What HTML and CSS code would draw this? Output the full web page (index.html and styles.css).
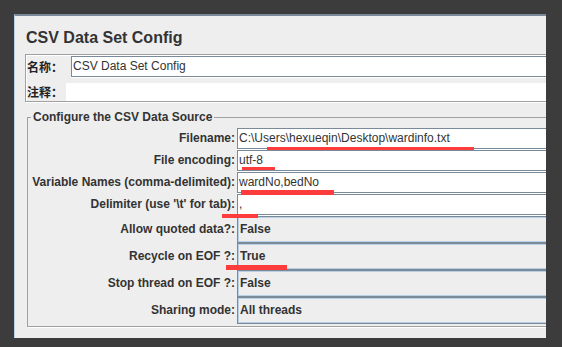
FILE: index.html
```html
<!DOCTYPE html>
<html lang="zh-CN">
<head>
  <meta charset="UTF-8" />
  <title>CSV Data Set Config</title>
  <link rel="stylesheet" href="styles.css">
</head>
<body>

  <div class="painel">
    <h1 class="titulo">CSV Data Set Config</h1>

    <!-- nome e comentario -->
    <div class="caixa-nome">
      <div class="linha-nome">
        <span class="rotulo-cn rotulo-nome">名称：</span>
        <div class="campo">CSV Data Set Config</div>
      </div>
      <div class="linha-comentario">
        <span class="rotulo-cn rotulo-comentario">注释：</span>
        <div class="area"></div>
      </div>
    </div>

    <fieldset class="grupo">
      <legend>Configure the CSV Data Source</legend>

      <div class="linha texto">
        <label>Filename:</label>
        <div class="campo">C:\Users\hexueqin\Desktop\wardinfo.txt</div>
      </div>
      <div class="linha texto">
        <label>File encoding:</label>
        <div class="campo">utf-8</div>
      </div>
      <div class="linha texto">
        <label>Variable Names (comma-delimited):</label>
        <div class="campo">wardNo,bedNo</div>
      </div>
      <div class="linha texto">
        <label>Delimiter (use '\t' for tab):</label>
        <div class="campo">,</div>
      </div>

      <div class="linha combo">
        <label>Allow quoted data?:</label>
        <div class="caixa-combo">False</div>
      </div>
      <div class="linha combo">
        <label>Recycle on EOF ?:</label>
        <div class="caixa-combo">True</div>
      </div>
      <div class="linha combo">
        <label>Stop thread on EOF ?:</label>
        <div class="caixa-combo">False</div>
      </div>
      <div class="linha combo">
        <label>Sharing mode:</label>
        <div class="caixa-combo">All threads</div>
      </div>
    </fieldset>
  </div>

  <!-- marcas vermelhas por cima da captura -->
  <div class="marca marca-arquivo"></div>
  <div class="marca marca-encoding"></div>
  <div class="marca marca-variaveis"></div>
  <div class="marca marca-delimitador"></div>
  <div class="marca marca-recycle"></div>

</body>
</html>
```

FILE: styles.css
```css
html, body {
  margin: 0; padding: 0;
  height: 100%;
  overflow: hidden;
  background: #3c3c3c;
  font-family: 'Liberation Sans', Arial, sans-serif;
  color: #333;
}

.painel {
  margin: 14px 0 0 14px;
  width: 532px;
  height: 324px;
  box-sizing: border-box;
  padding-left: 10px;
  background: #eeeeee;
  border-top: 2px solid #7b8a9a;
  border-left: 1px solid #b8cfe5;
  overflow: hidden;
}

.titulo {
  margin: 13px 0 7px 1px;
  font-size: 16px;
  line-height: 18px;
  font-weight: bold;
}

/* caixa do nome / comentario */
.caixa-nome {
  width: 600px;
  padding: 1px 0 0 1px;
  border: 1px solid #a0a0a0;
  box-shadow: inset 1px 1px 0 #fff, 1px 1px 0 #fff;
}

.rotulo-cn {
  font-family: 'Noto Sans CJK SC', sans-serif;
  font-size: 12px;
  font-weight: bold;
  color: #222;
}

.linha-nome {
  display: flex;
  height: 21px;
}

.rotulo-nome {
  width: 44px;
  line-height: 21px;
}

.linha-comentario {
  display: flex;
  height: 18px;
  margin-top: 6px;
}

.rotulo-comentario {
  width: 39px;
  line-height: 18px;
}

.area {
  flex: 1;
  background: white;
}

.campo {
  flex: 1;
  box-sizing: border-box;
  height: 21px;
  padding-left: 1px;
  background: white;
  border: 1px solid #7a8a99;
  box-shadow: 0 1px 0 #fff;
  font-size: 12px;
  line-height: 19px;
  white-space: nowrap;
}

/* grupo csv */
.grupo {
  width: 600px;
  min-width: 0;
  box-sizing: border-box;
  margin: 8px 0 0 2px;
  padding: 4px 0 2px 0;
  border: 1px solid #a0a0a0;
  box-shadow: 1px 1px 0 #fff;
}

.grupo legend {
  margin-left: 3px;
  padding: 0 2px;
  font-size: 12px;
  line-height: 14px;
  font-weight: bold;
}

.linha {
  display: grid;
  grid-template-columns: 207px 1fr;
  column-gap: 2px;
}

.linha label {
  text-align: right;
  font-size: 12px;
  font-weight: bold;
  white-space: nowrap;
}

.linha.texto {
  height: 22px;
}

.linha.texto label {
  line-height: 21px;
}

.linha.combo {
  height: 27px;
}

.linha.combo label {
  line-height: 27px;
}

.caixa-combo {
  box-sizing: border-box;
  height: 27px;
  padding-left: 2px;
  background: #eeeeee;
  border: 1px solid #7a8a99;
  box-shadow: inset 0 0 0 1px #b8cfe5;
  font-size: 12px;
  font-weight: bold;
  line-height: 25px;
}

/* marcas vermelhas */
.marca {
  position: absolute;
  background: #ff3c3c;
}

.marca-arquivo { left: 267px; top: 147px; width: 207px; height: 3px; }
.marca-encoding { left: 242px; top: 167px; width: 33px; height: 3px; }
.marca-variaveis { left: 241px; top: 190px; width: 93px; height: 5px; }
.marca-delimitador { left: 222px; top: 214px; width: 36px; height: 4px; }
.marca-recycle { left: 226px; top: 265px; width: 61px; height: 5px; }
```
